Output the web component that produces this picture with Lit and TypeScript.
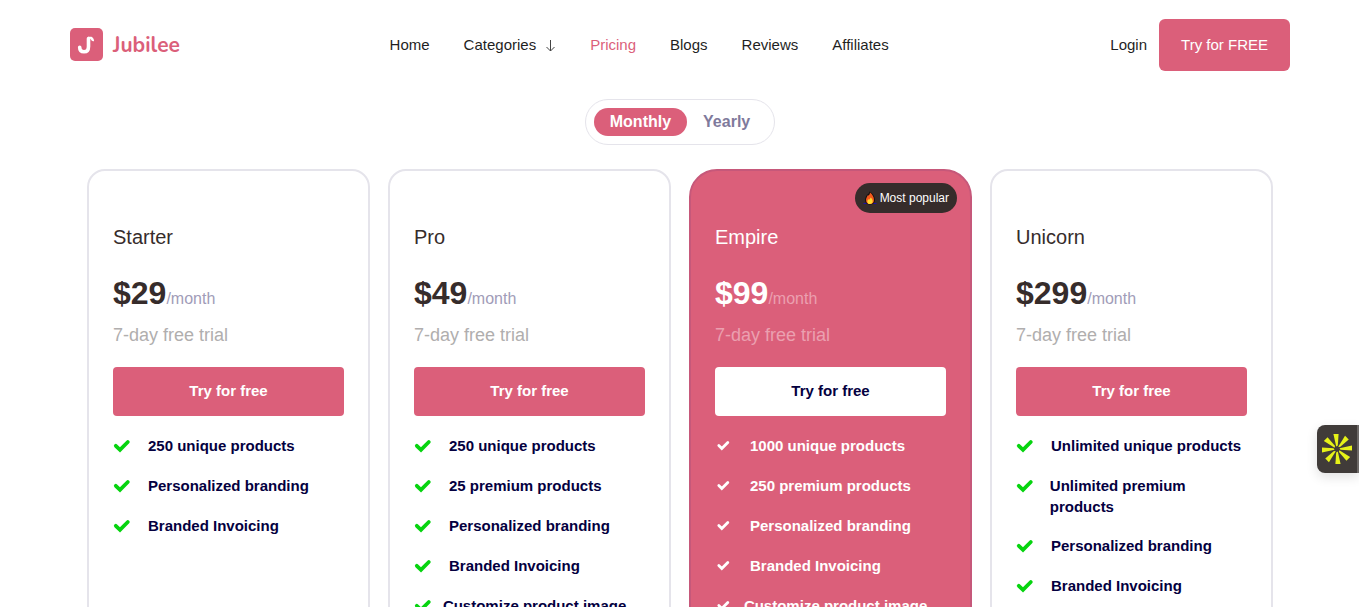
import { LitElement, html, css, svg } from "lit";
import { customElement, property, state } from "lit/decorators.js";
import { classMap } from "lit/directives/class-map.js";

interface Plan {
  name: string;
  price: number;
  features: string[];
  popular?: boolean;
}

const plans: Plan[] = [
  {
    name: "Starter",
    price: 29,
    features: ["250 unique products", "Personalized branding", "Branded Invoicing"],
  },
  {
    name: "Pro",
    price: 49,
    features: [
      "250 unique products",
      "25 premium products",
      "Personalized branding",
      "Branded Invoicing",
      "Customize product image and text",
    ],
  },
  {
    name: "Empire",
    price: 99,
    popular: true,
    features: [
      "1000 unique products",
      "250 premium products",
      "Personalized branding",
      "Branded Invoicing",
      "Customize product image and text",
    ],
  },
  {
    name: "Unicorn",
    price: 299,
    features: [
      "Unlimited unique products",
      "Unlimited premium products",
      "Personalized branding",
      "Branded Invoicing",
    ],
  },
];

@customElement("plan-card")
export class PlanCard extends LitElement {
  @property({ attribute: false }) plan!: Plan;

  static styles = css`
    :host {
      display: block;
      font-family: "Liberation Sans", Arial, sans-serif;
    }
    .card {
      position: relative;
      box-sizing: border-box;
      height: 100%;
      padding: 52px 24px 40px;
      border: 2px solid #e5e4eb;
      border-radius: 18px;
      color: #362c2b;
      background: #fff;
    }
    .name {
      margin: 0;
      font-size: 20px;
      line-height: 28px;
      font-weight: 400;
    }
    .price {
      margin: 20px 0 0;
      font-size: 32px;
      line-height: 44px;
      font-weight: 700;
    }
    .per {
      font-size: 16px;
      font-weight: 400;
      color: #a19cb8;
    }
    .trial {
      margin: 2px 0 0;
      font-size: 18px;
      line-height: 24px;
      color: #b0aeae;
    }
    .cta {
      display: block;
      width: 100%;
      height: 49px;
      margin: 20px 0 19px;
      padding: 0 0 1px;
      border: 0;
      border-radius: 4px;
      font: 700 15px/20px "Liberation Sans", Arial, sans-serif;
      color: #fff;
      background: #db5f7a;
      cursor: pointer;
    }
    .features {
      display: flex;
      flex-direction: column;
      gap: 18px;
      margin: 0;
      padding: 0;
      list-style: none;
      font-size: 15px;
      line-height: 21px;
      font-weight: 700;
      color: #04003f;
    }
    .feature {
      display: flex;
      min-height: 22px;
    }
    .mark {
      width: 35px;
      color: #06d40f;
    }
    .check {
      display: block;
      width: 18px;
      height: 22px;
    }
    .popular {
      border-color: #c6587a;
      border-radius: 28px;
      color: #fff;
      background: #db5f7a;
    }
    .popular .per,
    .popular .trial {
      color: #eba0b0;
    }
    .popular .cta {
      color: #04003f;
      background: #fff;
    }
    .popular .features,
    .popular .mark {
      color: #fff;
    }
    .badge {
      position: absolute;
      top: 12px;
      right: 13px;
      display: flex;
      align-items: center;
      gap: 3px;
      height: 30px;
      padding: 0 8px;
      border-radius: 15px;
      font-size: 12px;
      color: #fff;
      background: #362c2b;
    }
    .flame {
      width: 14px;
      height: 14px;
    }
  `;

  private check(small: boolean) {
    const path = small
      ? svg`<path d="M3.800 10.500 6.800 13.500 12.800 7.500" stroke-width="2.800" />`
      : svg`<path d="M2.800 10.800 7 14.800 14.800 7" stroke-width="3.800" />`;
    return html`<svg class="check" viewBox="0 0 18 22" fill="none" stroke="currentColor" stroke-linecap="round" aria-hidden="true">${path}</svg>`;
  }

  render() {
    const { name, price, features, popular = false } = this.plan;
    return html`
      <article class=${classMap({ card: true, popular })}>
        ${popular
          ? html`<span class="badge">
              <svg class="flame" viewBox="0 0 13 14" aria-hidden="true">
                <path d="M0 12.500h13" stroke="#1a12a8" />
                <path d="M6 .5c3 1.500 5.500 5 5.500 8.500 0 3-2 4.500-5 4.500s-5-1.500-5-4.500c0-2 .8-3.200 1.500-4.500C4 3 5.500 3 6 .5Z" fill="#17100f" />
                <path d="M6.500 1.500c2.500 2 4 4.500 4 7.500 0 2.500-1.500 4-4 4s-4-1.500-4-4c0-2 1-2.500 1.500-4.500C5 4.500 6.500 4 6.500 1.500Z" fill="#f4581c" />
                <path d="M7 6.500c1.500 1 2.200 2.300 2.200 3.700 0 1.800-1 2.800-2.700 2.800s-2.700-1-2.700-2.600c0-.9.400-1.600 1.200-2.200.5.800 1.500.5 2-1.700Z" fill="#ffd92e" />
              </svg>
              Most popular
            </span>`
          : ""}
        <h2 class="name">${name}</h2>
        <p class="price">$${price}<span class="per">/month</span></p>
        <p class="trial">7-day free trial</p>
        <button class="cta" type="button">Try for free</button>
        <ul class="features">
          ${features.map(
            (f) => html`<li class="feature"><span class="mark">${this.check(popular)}</span><span>${f}</span></li>`
          )}
        </ul>
      </article>
    `;
  }
}

@customElement("app-root")
export class AppRoot extends LitElement {
  @state() private period = "Monthly";

  static styles = css`
    :host {
      display: block;
      font-family: "Liberation Sans", Arial, sans-serif;
      font-size: 15px;
      color: #1f1f1f;
      background: #fff;
    }
    a {
      color: inherit;
      text-decoration: none;
    }
    .header {
      display: flex;
      align-items: center;
      justify-content: space-between;
      height: 90px;
      padding: 0 69px 0 70px;
      line-height: 18px;
    }
    .brand {
      display: flex;
      align-items: center;
      gap: 10px;
      font-family: Nunito, Lato, sans-serif;
      font-size: 21px;
      line-height: 34px;
      font-weight: 700;
      color: #db5f7a;
    }
    .logo {
      width: 33px;
      height: 34px;
    }
    .nav {
      display: flex;
      gap: 34px;
    }
    .categories {
      display: flex;
      align-items: center;
      gap: 9px;
    }
    .arrow {
      width: 11px;
      height: 14px;
    }
    .current {
      color: #db5f7a;
    }
    .actions {
      display: flex;
      align-items: center;
    }
    .login {
      padding: 0 12px;
    }
    .try {
      height: 52px;
      padding: 0 22px;
      border: 0;
      border-radius: 6px;
      font: 15px/20px "Liberation Sans", Arial, sans-serif;
      color: #fff;
      background: #db5f7a;
      cursor: pointer;
    }
    .main {
      display: flex;
      flex-direction: column;
      align-items: center;
      gap: 24px;
      padding: 9px 86px 40px 87px;
    }
    .toggle {
      display: flex;
      padding: 8px;
      border: 1px solid #e5e4eb;
      border-radius: 23px;
    }
    .period {
      height: 28px;
      padding: 0 16px;
      border: 0;
      border-radius: 14px;
      font: 700 16px/20px "Liberation Sans", Arial, sans-serif;
      color: #7f7a9c;
      background: none;
      cursor: pointer;
    }
    .selected {
      color: #fff;
      background: #db5f7a;
    }
    .plans {
      display: grid;
      grid-template-columns: repeat(4, 1fr);
      gap: 18px;
      width: 100%;
    }
    .widget {
      position: fixed;
      right: 0;
      top: 425px;
      display: grid;
      place-items: center;
      width: 42px;
      height: 48px;
      padding: 0;
      border: 0;
      border-right: 2px solid #6d6967;
      border-radius: 8px 0 0 8px;
      background: #403b39;
      box-shadow: 0 4px 12px rgba(0, 0, 0, 0.12);
      cursor: pointer;
    }
    .burst {
      width: 32px;
      height: 32px;
    }
  `;

  render() {
    return html`
      <header class="header">
        <a class="brand" href="#">
          <svg class="logo" viewBox="0 0 33 34" aria-hidden="true">
            <rect width="33" height="33" rx="5" fill="#db5f7a" />
            <path d="M18.500 10.500V18.500c0 3.500-1.900 5.300-4.500 5.300-2.700 0-4.300-1.800-4.300-4.500" fill="none" stroke="#fff" stroke-width="3.600" stroke-linecap="round" />
            <path d="M18 8.700h3.500c1.500.9 2.600 2.300 2.600 4.300-1.300.6-2.500 0-3-1.200-.3-.8-1.200-1.300-3.100-1.300Z" fill="#fff" />
          </svg>
          Jubilee
        </a>
        <nav class="nav">
          <a href="#">Home</a>
          <a class="categories" href="#">
            Categories
            <svg class="arrow" viewBox="0 0 11 14" fill="none" stroke="#444" aria-hidden="true">
              <path d="M5.500 2v11M1.500 9l4 4 4-4" />
            </svg>
          </a>
          <a class="current" href="#">Pricing</a>
          <a href="#">Blogs</a>
          <a href="#">Reviews</a>
          <a href="#">Affiliates</a>
        </nav>
        <div class="actions">
          <a class="login" href="#">Login</a>
          <button class="try" type="button">Try for FREE</button>
        </div>
      </header>
      <main class="main">
        <div class="toggle" role="group" aria-label="Billing period">
          ${["Monthly", "Yearly"].map(
            (p) => html`<button
              type="button"
              class=${classMap({ period: true, selected: p === this.period })}
              aria-pressed=${p === this.period}
              @click=${() => (this.period = p)}
            >${p}</button>`
          )}
        </div>
        <section class="plans">
          ${plans.map((plan) => html`<plan-card .plan=${plan}></plan-card>`)}
        </section>
      </main>
      <button class="widget" type="button" aria-label="Open assistant">
        <svg class="burst" viewBox="-16 -16 32 32" fill="#e6f218" aria-hidden="true">
          ${[0, 45, 90, 135, 180, 225, 270, 315].map(
            (a) => svg`<path d="M-3.600-15 1.600-15 .8-3.500-.8-2.500Z" transform="rotate(${a})" />`
          )}
        </svg>
      </button>
    `;
  }
}
